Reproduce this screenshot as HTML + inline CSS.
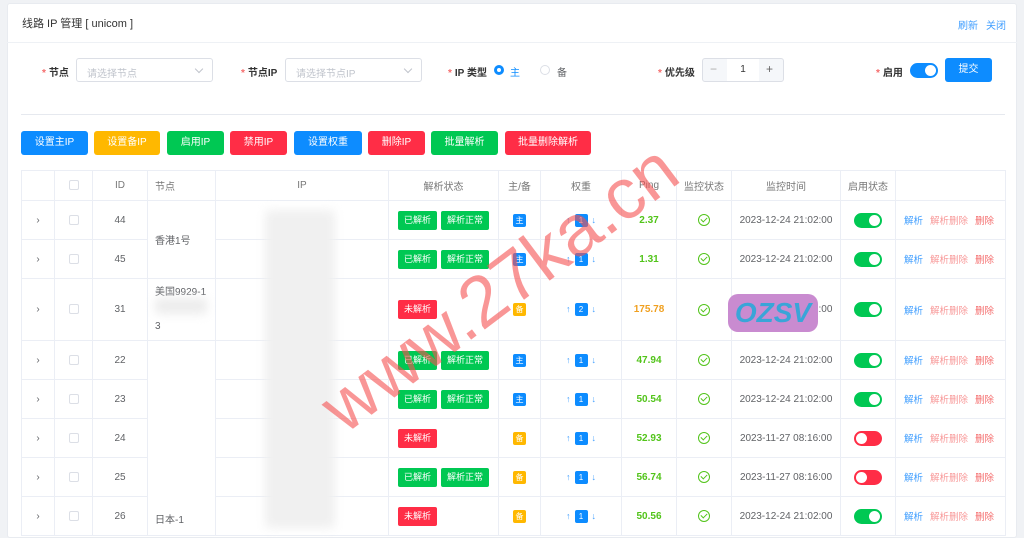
<!DOCTYPE html>
<html style="overflow:hidden;height:538px"><head><meta charset="utf-8">
<style>
*{box-sizing:border-box;margin:0;padding:0}
body{width:1024px;height:538px;overflow:hidden;background:#f0f2f5;font-family:"Liberation Sans","Noto Sans CJK SC",sans-serif;font-size:10px;color:#606266;position:relative}
.card{position:absolute;left:7px;top:3px;width:1010px;height:535px;background:#fff;border:1px solid #e8ebf0;border-radius:3px}
.hd{position:absolute;left:7px;top:3px;width:1010px;height:40px;border-bottom:1px solid #eef1f5}
.title{position:absolute;left:22px;top:15px;font-size:11px;color:#333}
.links{position:absolute;right:18px;top:17px;font-size:10px;color:#409eff}
.links span{margin-left:8px}
.lbl{position:absolute;top:64px;font-size:10px;color:#333;font-weight:bold}
.lbl:before{content:"*";color:#f56c6c;margin-right:3px}
.sel{position:absolute;top:58px;height:24px;border:1px solid #dcdfe6;border-radius:3px;color:#c0c4cc;font-size:10px;padding:6px 10px}
.sel:after{content:"";position:absolute;right:10px;top:7px;width:5px;height:5px;border-right:1px solid #c0c4cc;border-bottom:1px solid #c0c4cc;transform:rotate(45deg)}
.hr{position:absolute;left:21px;top:114px;width:984px;border-top:1px solid #e6e9ef}
.btn{position:absolute;top:131px;height:24px;border-radius:3px;color:#fff;font-size:10px;text-align:center;line-height:24px}
.b{background:#0d8cff}.y{background:#ffb800}.g{background:#00c853}.r{background:#ff2d46}
table{position:absolute;left:21px;top:170px;border-collapse:collapse;table-layout:fixed;width:984px}
td,th{border:1px solid #ebeef5;text-align:center;font-weight:normal;font-size:10px;color:#606266;white-space:nowrap;overflow:hidden}
th{height:30px;color:#777}
.cb{display:inline-block;width:10px;height:10px;border:1px solid #dcdfe6;border-radius:2px;vertical-align:middle}
.tag{display:inline-block;height:19px;line-height:19px;padding:0 6px;border-radius:2px;color:#fff;font-size:9px;margin:0 2px}
.sm{display:inline-block;width:13px;height:13px;line-height:13px;border-radius:2px;color:#fff;font-size:8px}
.w{display:inline-block;width:13px;height:13px;line-height:13px;border-radius:2px;color:#fff;background:#0d8cff;font-size:8px;margin:0 4px}
.ar{color:#409eff;font-size:9px}
.ok{display:inline-block;width:12px;height:12px;border:1.3px solid #52c41a;border-radius:50%;position:relative;vertical-align:middle}
.ok:after{content:"";position:absolute;left:3px;top:1px;width:3px;height:5px;border-right:1.3px solid #52c41a;border-bottom:1.3px solid #52c41a;transform:rotate(45deg)}
.sw{display:inline-block;width:28px;height:15px;border-radius:8px;background:#00c853;position:relative;vertical-align:middle}
.sw:after{content:"";position:absolute;right:2px;top:2px;width:11px;height:11px;border-radius:50%;background:#fff}
.sw.off{background:#ff2d46}.sw.off:after{right:auto;left:2px}
.ops{text-align:left;padding-left:8px;font-size:9.5px}
.ops span{margin-right:7px}
.p{color:#409eff}.pd{color:#f89898}.d{color:#f56c6c}
.blur{position:absolute;background:#e4e4e4;filter:blur(5px);border-radius:4px}
.wm{position:absolute;left:330px;top:380px;font-size:72px;color:rgba(245,80,80,.6);transform:rotate(-37deg);transform-origin:left center;white-space:nowrap;font-family:"Liberation Sans",sans-serif;line-height:1}
</style></head><body>
<div class="card"></div>
<div class="hd"></div>
<div class="title">线路 IP 管理 [ unicom ]</div>
<div class="links"><span>刷新</span><span>关闭</span></div>

<div class="lbl" style="left:42px">节点</div>
<div class="sel" style="left:76px;width:137px">请选择节点</div>
<div class="lbl" style="left:241px">节点IP</div>
<div class="sel" style="left:285px;width:137px">请选择节点IP</div>
<div class="lbl" style="left:448px">IP 类型</div>
<div style="position:absolute;left:494px;top:65px;width:10px;height:10px;border-radius:50%;border:3px solid #0d8cff"></div>
<div style="position:absolute;left:510px;top:64px;color:#0d8cff;font-size:10px">主</div>
<div style="position:absolute;left:540px;top:65px;width:10px;height:10px;border-radius:50%;border:1px solid #dcdfe6"></div>
<div style="position:absolute;left:557px;top:64px;color:#606266;font-size:10px">备</div>
<div class="lbl" style="left:658px">优先级</div>
<div style="position:absolute;left:702px;top:58px;width:82px;height:24px;border:1px solid #dcdfe6;border-radius:3px;background:#f5f7fa">
<div style="position:absolute;left:24px;top:0;width:32px;height:22px;background:#fff;text-align:center;line-height:22px;color:#333">1</div>
<div style="position:absolute;left:7px;top:3px;color:#aaa;font-size:12px">−</div>
<div style="position:absolute;left:63px;top:3px;color:#666;font-size:12px">+</div></div>
<div class="lbl" style="left:876px">启用</div>
<div class="sw" style="position:absolute;left:910px;top:63px;background:#0d8cff"></div>
<div class="btn b" style="left:945px;top:58px;width:47px">提交</div>
<div class="hr"></div>

<div class="btn b" style="left:21px;width:67px">设置主IP</div>
<div class="btn y" style="left:94px;width:66px">设置备IP</div>
<div class="btn g" style="left:167px;width:57px">启用IP</div>
<div class="btn r" style="left:230px;width:57px">禁用IP</div>
<div class="btn b" style="left:294px;width:68px">设置权重</div>
<div class="btn r" style="left:368px;width:57px">删除IP</div>
<div class="btn g" style="left:431px;width:67px">批量解析</div>
<div class="btn r" style="left:505px;width:86px">批量删除解析</div>

<table>
<colgroup><col style="width:33px"><col style="width:38px"><col style="width:55px"><col style="width:68px"><col style="width:173px"><col style="width:110px"><col style="width:42px"><col style="width:81px"><col style="width:55px"><col style="width:55px"><col style="width:109px"><col style="width:55px"><col style="width:110px"></colgroup>
<tr><th></th><th><span class="cb"></span></th><th>ID</th><th style="text-align:left;padding-left:7px">节点</th><th>IP</th><th>解析状态</th><th>主/备</th><th>权重</th><th>Ping</th><th>监控状态</th><th>监控时间</th><th>启用状态</th><th></th></tr>
<tr style="height:39px"><td>›</td><td><span class="cb"></span></td><td>44</td><td rowspan="2" style="text-align:left;padding-left:7px">香港1号</td><td></td><td><span class="tag g">已解析</span><span class="tag g">解析正常</span></td><td><span class="sm b">主</span></td><td><span class="ar">↑</span><span class="w">1</span><span class="ar">↓</span></td><td style="color:#52c41a;font-weight:bold">2.37</td><td><span class="ok"></span></td><td>2023-12-24 21:02:00</td><td><span class="sw"></span></td><td class="ops"><span class="p">解析</span><span class="pd">解析删除</span><span class="d">删除</span></td></tr>
<tr style="height:39px"><td>›</td><td><span class="cb"></span></td><td>45</td><td></td><td><span class="tag g">已解析</span><span class="tag g">解析正常</span></td><td><span class="sm b">主</span></td><td><span class="ar">↑</span><span class="w">1</span><span class="ar">↓</span></td><td style="color:#52c41a;font-weight:bold">1.31</td><td><span class="ok"></span></td><td>2023-12-24 21:02:00</td><td><span class="sw"></span></td><td class="ops"><span class="p">解析</span><span class="pd">解析删除</span><span class="d">删除</span></td></tr>
<tr style="height:62px"><td>›</td><td><span class="cb"></span></td><td>31</td><td style="text-align:left;padding-left:7px;line-height:17px">美国9929-1<br>&nbsp;<br>3</td><td></td><td style="text-align:left;padding-left:7px"><span class="tag r">未解析</span></td><td><span class="sm y">备</span></td><td><span class="ar">↑</span><span class="w">2</span><span class="ar">↓</span></td><td style="color:#f0a020;font-weight:bold">175.78</td><td><span class="ok"></span></td><td>2023-12-24 21:02:00</td><td><span class="sw"></span></td><td class="ops"><span class="p">解析</span><span class="pd">解析删除</span><span class="d">删除</span></td></tr>
<tr style="height:39px"><td>›</td><td><span class="cb"></span></td><td>22</td><td rowspan="6" style="text-align:left;padding-left:7px;vertical-align:top;padding-top:170px">日本-1</td><td></td><td><span class="tag g">已解析</span><span class="tag g">解析正常</span></td><td><span class="sm b">主</span></td><td><span class="ar">↑</span><span class="w">1</span><span class="ar">↓</span></td><td style="color:#52c41a;font-weight:bold">47.94</td><td><span class="ok"></span></td><td>2023-12-24 21:02:00</td><td><span class="sw"></span></td><td class="ops"><span class="p">解析</span><span class="pd">解析删除</span><span class="d">删除</span></td></tr>
<tr style="height:39px"><td>›</td><td><span class="cb"></span></td><td>23</td><td></td><td><span class="tag g">已解析</span><span class="tag g">解析正常</span></td><td><span class="sm b">主</span></td><td><span class="ar">↑</span><span class="w">1</span><span class="ar">↓</span></td><td style="color:#52c41a;font-weight:bold">50.54</td><td><span class="ok"></span></td><td>2023-12-24 21:02:00</td><td><span class="sw"></span></td><td class="ops"><span class="p">解析</span><span class="pd">解析删除</span><span class="d">删除</span></td></tr>
<tr style="height:39px"><td>›</td><td><span class="cb"></span></td><td>24</td><td></td><td style="text-align:left;padding-left:7px"><span class="tag r">未解析</span></td><td><span class="sm y">备</span></td><td><span class="ar">↑</span><span class="w">1</span><span class="ar">↓</span></td><td style="color:#52c41a;font-weight:bold">52.93</td><td><span class="ok"></span></td><td>2023-11-27 08:16:00</td><td><span class="sw off"></span></td><td class="ops"><span class="p">解析</span><span class="pd">解析删除</span><span class="d">删除</span></td></tr>
<tr style="height:39px"><td>›</td><td><span class="cb"></span></td><td>25</td><td></td><td><span class="tag g">已解析</span><span class="tag g">解析正常</span></td><td><span class="sm y">备</span></td><td><span class="ar">↑</span><span class="w">1</span><span class="ar">↓</span></td><td style="color:#52c41a;font-weight:bold">56.74</td><td><span class="ok"></span></td><td>2023-11-27 08:16:00</td><td><span class="sw off"></span></td><td class="ops"><span class="p">解析</span><span class="pd">解析删除</span><span class="d">删除</span></td></tr>
<tr style="height:39px"><td>›</td><td><span class="cb"></span></td><td>26</td><td></td><td style="text-align:left;padding-left:7px"><span class="tag r">未解析</span></td><td><span class="sm y">备</span></td><td><span class="ar">↑</span><span class="w">1</span><span class="ar">↓</span></td><td style="color:#52c41a;font-weight:bold">50.56</td><td><span class="ok"></span></td><td>2023-12-24 21:02:00</td><td><span class="sw"></span></td><td class="ops"><span class="p">解析</span><span class="pd">解析删除</span><span class="d">删除</span></td></tr>
</table>

<div class="blur" style="left:265px;top:210px;width:70px;height:318px;background:#f0f0f0"></div>
<div class="blur" style="left:155px;top:298px;width:52px;height:16px;background:#ececec"></div>
<div class="wm">www.27ka.cn</div>
<div style="position:absolute;left:728px;top:294px;width:90px;height:38px;border-radius:10px;background:#c98bd0;color:#3aa5d8;font-size:28px;font-weight:bold;text-align:center;line-height:38px;font-style:italic">OZSV</div>
</body></html>
